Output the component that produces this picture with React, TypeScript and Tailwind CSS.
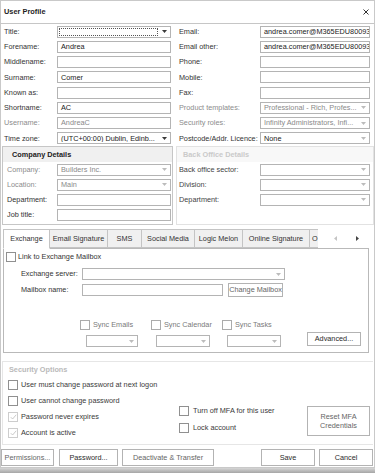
import React from "react"

const Arrow = ({ dark }: { dark?: boolean }) => (
    <svg width="5" height="3" viewBox="0 0 5 3" className="shrink-0">
        <path d="M0 0H5L2.5 3Z" fill={dark ? "#3a3a3a" : "#bcbcbc"} />
    </svg>
)

type FieldProps = {
    value?: string
    w: string
    muted?: boolean
    combo?: boolean
    darkArrow?: boolean
    focus?: boolean
}

const Field = ({ value = "", w, muted, combo, darkArrow, focus }: FieldProps) => (
    <div className={`flex h-[12px] shrink-0 items-center border border-[#b4b4b4] bg-white ${w}`}>
        {focus ? (
            <div className="mx-[1px] h-[8px] flex-1 border border-dotted border-[#555]" />
        ) : (
            <div className={`flex-1 overflow-hidden whitespace-nowrap pl-[3px] ${muted ? "text-[#8a8a8a]" : "text-[#222]"}`}>
                {value}
            </div>
        )}
        {combo && (
            <div className="flex w-[11px] shrink-0 justify-center">
                <Arrow dark={darkArrow} />
            </div>
        )}
    </div>
)

const Check = ({ checked, disabled }: { checked?: boolean; disabled?: boolean }) => (
    <span
        className={`flex h-[10px] w-[10px] shrink-0 items-center justify-center border bg-white ${
            disabled ? "border-[#cdcdcd]" : "border-[#909090]"
        }`}
    >
        {checked && (
            <svg width="7" height="6" viewBox="0 0 7 6">
                <path d="M0.8 3.2 2.6 5 6.2 0.8" fill="none" stroke="#bdbdbd" strokeWidth="0.8" />
            </svg>
        )}
    </span>
)

const Button = ({ label, w, h = "h-[17px]", muted }: { label: React.ReactNode; w: string; h?: string; muted?: boolean }) => (
    <div
        className={`flex shrink-0 items-center justify-center border border-[#b3b3b3] bg-white text-center leading-[1.25] ${
            muted ? "text-[#666]" : "text-[#2b2b2b]"
        } ${w} ${h}`}
    >
        {label}
    </div>
)

const LEFT = [
    { label: "Title:", field: <Field w="w-[114px]" combo darkArrow focus /> },
    { label: "Forename:", field: <Field w="w-[114px]" value="Andrea" /> },
    { label: "Middlename:", field: <Field w="w-[114px]" /> },
    { label: "Surname:", field: <Field w="w-[114px]" value="Comer" /> },
    { label: "Known as:", field: <Field w="w-[114px]" /> },
    { label: "Shortname:", field: <Field w="w-[114px]" value="AC" /> },
    { label: "Username:", muted: true, field: <Field w="w-[114px]" value="AndreaC" muted /> },
    { label: "Time zone:", field: <Field w="w-[114px]" value="(UTC+00:00) Dublin, Edinb..." combo darkArrow /> },
]

const EMAIL = "andrea.comer@M365EDU800939.onmicrosoft.com"

const RIGHT = [
    { label: "Email:", field: <Field w="w-[110px]" value={EMAIL} /> },
    { label: "Email other:", field: <Field w="w-[110px]" value={EMAIL} /> },
    { label: "Phone:", field: <Field w="w-[110px]" /> },
    { label: "Mobile:", field: <Field w="w-[110px]" /> },
    { label: "Fax:", field: <Field w="w-[110px]" /> },
    { label: "Product templates:", muted: true, field: <Field w="w-[110px]" value="Professional - Rich, Profes..." muted combo /> },
    { label: "Security roles:", muted: true, field: <Field w="w-[110px]" value="Infinity Administrators, Infi..." muted combo /> },
    { label: "Postcode/Addr. Licence:", field: <Field w="w-[110px]" value="None" combo /> },
]

const TABS = [
    { label: "Exchange", w: "w-[47px]", active: true },
    { label: "Email Signature", w: "w-[58px]" },
    { label: "SMS", w: "w-[34px]" },
    { label: "Social Media", w: "w-[53px]" },
    { label: "Logic Melon", w: "w-[48px]" },
    { label: "Online Signature", w: "w-[67px]" },
]

export default function App() {
    return (
        <div className="h-[473px] w-[375px] overflow-hidden bg-white font-['Liberation_Sans',Arial,sans-serif] text-[7.3px] leading-none text-[#333]">
            <div className="flex h-[468px] flex-col border border-[#c9c9c9]">
                {/* title bar */}
                <div className="flex h-[23px] shrink-0 items-center justify-between border-b border-[#c6c6c6] pl-[3px] pr-[5px]">
                    <span className="text-[7.4px] font-bold text-[#1e1e1e]">User Profile</span>
                    <svg width="6" height="6" viewBox="0 0 6 6">
                        <path d="M0.5 0.5 5.5 5.5M5.5 0.5 0.5 5.5" stroke="#333" strokeWidth="1" />
                    </svg>
                </div>

                {/* personal fields */}
                <div className="flex shrink-0">
                    <div className="flex flex-col pl-[3px]">
                        {LEFT.map((r) => (
                            <div key={r.label} className="flex h-[15.25px] items-center">
                                <span className={`w-[53px] ${r.muted ? "text-[#8c8c8c]" : ""}`}>{r.label}</span>
                                {r.field}
                            </div>
                        ))}
                    </div>
                    <div className="ml-[8px] flex flex-col">
                        {RIGHT.map((r) => (
                            <div key={r.label} className="flex h-[15.25px] items-center">
                                <span className={`w-[81px] whitespace-nowrap ${r.muted ? "text-[#8c8c8c]" : ""}`}>{r.label}</span>
                                {r.field}
                            </div>
                        ))}
                    </div>
                </div>

                {/* group boxes */}
                <div className="flex h-[79px] shrink-0">
                    <div className="ml-[1px] flex w-[171px] flex-col border border-[#c6c6c6]">
                        <div className="flex h-[15px] items-center bg-[#f0f0f0] pl-[9px] font-bold text-[#222]">Company Details</div>
                        {[
                            { label: "Company:", muted: true, field: <Field w="w-[114px]" value="Builders Inc." muted combo /> },
                            { label: "Location:", muted: true, field: <Field w="w-[114px]" value="Main" muted combo /> },
                            { label: "Department:", field: <Field w="w-[114px]" /> },
                            { label: "Job title:", field: <Field w="w-[114px]" /> },
                        ].map((r) => (
                            <div key={r.label} className="flex h-[15px] items-center pl-[4px]">
                                <span className={`w-[50px] ${r.muted ? "text-[#8c8c8c]" : ""}`}>{r.label}</span>
                                {r.field}
                            </div>
                        ))}
                    </div>
                    <div className="ml-[3px] flex w-[198px] flex-col border border-[#e2e2e2]">
                        <div className="flex h-[15px] items-center bg-[#f8f8f8] pl-[6px] font-bold text-[#cacaca]">Back Office Details</div>
                        {["Back office sector:", "Division:", "Department:"].map((l) => (
                            <div key={l} className="flex h-[15px] items-center pl-[2px]">
                                <span className="w-[81px] text-[#444]">{l}</span>
                                <Field w="w-[110px]" combo />
                            </div>
                        ))}
                    </div>
                </div>

                {/* tabs */}
                <div className="relative z-10 -mb-px ml-[2px] mt-[4px] flex h-[20px] shrink-0 items-start">
                    {TABS.map((t, i) => (
                        <div
                            key={t.label}
                            className={`flex shrink-0 items-center justify-center whitespace-nowrap border-y border-r border-[#c4c4c4] ${
                                i === 0 ? "border-l" : ""
                            } ${t.active ? "h-[20px] border-b-white bg-white" : "h-[19px] bg-[#f0f0f0]"} ${t.w}`}
                        >
                            {t.label}
                        </div>
                    ))}
                    <div className="flex h-[19px] w-[8px] shrink-0 items-center overflow-hidden border-y border-[#c4c4c4] bg-[#f0f0f0] pl-[2px]">
                        O
                    </div>
                    <div className="flex h-[19px] flex-1 items-center bg-white pl-[16px]">
                        <svg width="3" height="5" viewBox="0 0 3 5">
                            <path d="M3 0V5L0 2.5Z" fill="#c4c4c4" />
                        </svg>
                        <svg width="3" height="5" viewBox="0 0 3 5" className="ml-[19px]">
                            <path d="M0 0V5L3 2.5Z" fill="#444" />
                        </svg>
                    </div>
                </div>

                {/* tab panel */}
                <div className="ml-[2px] flex h-[105px] w-[366px] shrink-0 flex-col border border-[#b9b9b9] bg-white">
                    <div className="ml-[2px] mt-[3px] flex items-center gap-[2px]">
                        <Check />
                        <span>Link to Exchange Mailbox</span>
                    </div>
                    <div className="mt-[6px] flex h-[12px] items-center pl-[17px]">
                        <span className="w-[61px]">Exchange server:</span>
                        <Field w="w-[203px]" combo />
                    </div>
                    <div className="mt-[3px] flex h-[14px] items-center pl-[17px]">
                        <span className="w-[61px]">Mailbox name:</span>
                        <Field w="w-[141px]" />
                        <Button label="Change Mailbox" w="ml-[5px] w-[55px]" h="h-[14px]" muted />
                    </div>
                    <div className="ml-[76px] mt-[23px] flex text-[#7a7a7a]">
                        {["Sync Emails", "Sync Calendar", "Sync Tasks"].map((l) => (
                            <div key={l} className="flex w-[71px] items-center gap-[3px]">
                                <span className="flex h-[10px] w-[10px] border border-[#ababab] bg-white" />
                                <span>{l}</span>
                            </div>
                        ))}
                    </div>
                    <div className="mt-[2px] flex items-start">
                        <div className="ml-[82px] mt-[3px]">
                            <Field w="w-[52px]" combo />
                        </div>
                        <div className="ml-[18px] mt-[3px]">
                            <Field w="w-[54px]" combo />
                        </div>
                        <div className="ml-[17px] mt-[3px]">
                            <Field w="w-[54px]" combo />
                        </div>
                        <Button label="Advanced..." w="ml-[26px] w-[54px]" h="h-[14px]" />
                    </div>
                </div>

                {/* security options */}
                <div className="ml-[1px] mt-[8px] flex h-[84px] w-[371px] shrink-0 flex-col border-y border-l border-[#e6e6e6]">
                    <div className="flex h-[11px] items-end pl-[6px] font-bold text-[#bababa]">Security Options</div>
                    <div className="mt-[4px] flex">
                        <div className="flex w-[176px] flex-col pl-[5px]">
                            {[
                                { l: "User must change password at next logon" },
                                { l: "User cannot change password" },
                                { l: "Password never expires", c: true },
                                { l: "Account is active", c: true },
                            ].map((r) => (
                                <div key={r.l} className="flex h-[16px] items-center gap-[3px] text-[#3a3a3a]">
                                    <Check checked={r.c} disabled={r.c} />
                                    <span>{r.l}</span>
                                </div>
                            ))}
                        </div>
                        <div className="flex w-[128px] flex-col pt-[26px] text-[#3a3a3a]">
                            <div className="flex h-[16px] items-center gap-[4px]">
                                <Check />
                                <span>Turn off MFA for this user</span>
                            </div>
                            <div className="mt-[1px] flex h-[16px] items-center gap-[4px]">
                                <Check />
                                <span>Lock account</span>
                            </div>
                        </div>
                        <div className="pt-[29px]">
                            <Button
                                label={
                                    <span>
                                        Reset MFA
                                        <br />
                                        Credentials
                                    </span>
                                }
                                w="w-[63px]"
                                h="h-[30px]"
                                muted
                            />
                        </div>
                    </div>
                </div>

                {/* footer buttons */}
                <div className="mt-[4px] flex shrink-0">
                    <Button label="Permissions..." w="w-[53px]" muted />
                    <Button label="Password..." w="ml-[5px] w-[59px]" />
                    <Button label="Deactivate & Transfer" w="ml-[4px] w-[92px]" muted />
                    <Button label="Save" w="ml-[47px] w-[54px]" />
                    <Button label="Cancel" w="ml-[4px] w-[54px]" />
                </div>
            </div>
            <div className="h-[5px] bg-gradient-to-b from-[#d6d6d6] to-[#a6a6a6]" />
        </div>
    )
}
